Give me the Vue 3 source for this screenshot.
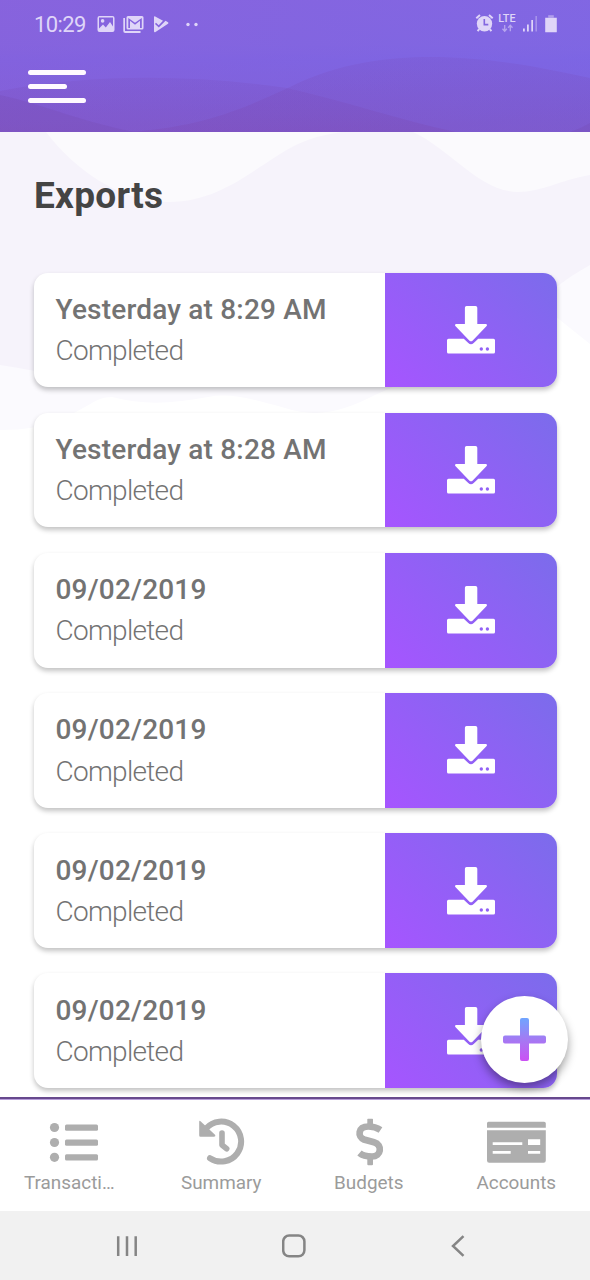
<script setup>
const exportsList = [
  { title: 'Yesterday at 8:29 AM', status: 'Completed' },
  { title: 'Yesterday at 8:28 AM', status: 'Completed' },
  { title: '09/02/2019', status: 'Completed' },
  { title: '09/02/2019', status: 'Completed' },
  { title: '09/02/2019', status: 'Completed' },
  { title: '09/02/2019', status: 'Completed' },
]
</script>

<template>
  <div class="screen">
    <header class="header">
      <svg class="waves" viewBox="0 0 590 132" preserveAspectRatio="none">
        <defs>
          <linearGradient id="fadeA" x1="0" y1="0" x2="0" y2="1">
            <stop offset="0" stop-color="#7646b0" stop-opacity=".15" />
            <stop offset="1" stop-color="#7c48ae" stop-opacity=".28" />
          </linearGradient>
        </defs>
        <path d="M0 91C90 74 190 74 287 88C345 101 400 120 456 132H0Z" fill="url(#fadeA)" />
        <path d="M130 132C210 126 250 105 290 87C340 62 390 57 430 57C490 57 545 68 590 78V132Z" fill="url(#fadeA)" />
        <path d="M0 95C45 105 85 123 135 132H0Z" fill="#7347a5" opacity=".2" />
        <path d="M570 132Q580 129 590 123V132Z" fill="#7347a5" opacity=".2" />
      </svg>
      <div class="status">
        <span class="clock">10:29</span>
        <svg class="status-left" viewBox="0 0 104 20" width="104" height="20">
          <path fill-rule="evenodd" d="M2.5 1H15.5Q17.5 1 17.5 3V15Q17.5 17 15.5 17H2.5Q.5 17 .5 15V3Q.5 1 2.5 1ZM2 2.5V13.5L6 9.5L8.8 12.5L13 7L16 11.5V2.5Z" />
          <circle cx="5.6" cy="5.9" r="1.8" />
          <path d="M26.3 3H28V16H43.5V18H28.2Q26.3 18 26.3 16Z" />
          <path fill-rule="evenodd" d="M31 1H45Q46.5 1 46.5 2.5V13Q46.5 14.5 45 14.5H31Q29.5 14.5 29.5 13V2.5Q29.5 1 31 1ZM31.3 3V13H33V5.8L38 9.7L43 5.8V13H44.8V3L38 7.7Z" />
          <path d="M34.3 7.5V13.2H41.8V7.5L38 10.6Z" opacity=".75" />
          <path d="M57 2Q57 .8 58.2 1.5L66 5.8L61.7 10.3L59 7.8L58 9L61.8 12.5L68.5 5.7L71 7.2Q72 8 71 8.8L58.5 17Q57 17.7 57 16Z" />
          <circle cx="91" cy="9.5" r="1.7" /><circle cx="99" cy="9.5" r="1.7" />
        </svg>
        <svg class="status-right" viewBox="0 0 84 22" width="84" height="22">
          <circle cx="9.5" cy="10.8" r="7.7" />
          <path d="M1.3 5.2L5 2M17.7 5.2L14 2M4.2 16.2L2.6 18.2M14.8 16.2L16.4 18.2" stroke="#dfd5f8" stroke-width="2" />
          <path d="M9.3 6V11.6H13.3" fill="none" stroke="#8366df" stroke-width="1.6" />
          <text x="23.3" y="9.4" textLength="17.2" lengthAdjust="spacingAndGlyphs">LTE</text>
          <path d="M29.7 12V18M27.5 15.7L29.7 18.2L31.9 15.7M35.3 18.2V12.5M33.1 14.7L35.3 12.3L37.5 14.7" fill="none" stroke="#b6a5ee" stroke-width="1.3" />
          <path d="M48 15.5H49.8V18.5H48ZM52 11.5H53.8V18.5H52ZM56.3 7H58V18.5H56.3Z" />
          <path d="M60.4 3H62V18.5H60.4Z" opacity=".4" />
          <path d="M70.2 4.7H81.8V18.7Q81.8 19.2 81.3 19.2H70.7Q70.2 19.2 70.2 18.7Z" />
          <path d="M73.2 2.2H78.8V4.7H73.2Z" opacity=".5" />
        </svg>
      </div>
      <div class="menu"><i /><i class="short" /><i /></div>
    </header>

    <main class="content">
      <svg class="backdrop" viewBox="0 0 590 300">
        <path d="M0 0H590V212Q575 200 555 184L375 263C345 278 320 287 285 276C250 266 230 261 208 265C175 271 145 274 112 265C95 265 88 276 65 285C45 295 25 298 0 298Z" fill="#fbfafe" />
        <path d="M0 0H590V133C565 147 550 160 530 175L350 250H90C60 245 30 237 0 233Z" fill="#f6f3fb" />
        <path d="M46 0C75 38 120 70 169 70C225 70 260 30 298 12Q318 3 342 0Z" fill="#fbfafd" />
        <path d="M413 0C450 17 480 60 518 60C542 60 560 48 590 43V0Z" fill="#fbfafd" />
      </svg>
      <h1>Exports</h1>
      <div class="list">
        <article v-for="(item, i) in exportsList" :key="i" class="card">
          <div class="info">
            <div class="title">{{ item.title }}</div>
            <div class="state">{{ item.status }}</div>
          </div>
          <div class="action">
            <svg viewBox="0 0 48 48" width="48" height="48" fill="#fff">
              <path d="M19.5 0H28.5Q30.3 0 30.3 1.8V18H38.5Q41 18.3 39.4 20.3L25.5 34.7Q24 36 22.5 34.7L8.6 20.3Q7 18.3 9.5 18H17.9V1.8Q17.9 0 19.5 0Z" />
              <path fill-rule="evenodd" d="M1.5 32.7H16.8L21.3 37Q24 39.4 26.7 37L31.2 32.7H46.5Q48 32.7 48 34.2V46Q48 47.5 46.5 47.5H1.5Q0 47.5 0 46V34.2Q0 32.7 1.5 32.7ZM32.6 43A1.7 1.7 0 1 0 36 43A1.7 1.7 0 1 0 32.6 43ZM38.7 43A1.7 1.7 0 1 0 42.1 43A1.7 1.7 0 1 0 38.7 43Z" />
            </svg>
          </div>
        </article>
      </div>
      <div class="fab">
        <svg viewBox="0.5 0.5 43 43" width="43" height="43">
          <defs>
            <linearGradient id="plus" x1="0" y1="0" x2="0" y2="1">
              <stop offset="0" stop-color="#6fa5ff" />
              <stop offset=".5" stop-color="#a47af3" />
              <stop offset="1" stop-color="#cb51f4" />
            </linearGradient>
          </defs>
          <path d="M19.5 .5H24.5Q26.5 .5 26.5 2.5V18H41.5Q43.5 18 43.5 20V24Q43.5 26 41.5 26H26.5V41.5Q26.5 43.5 24.5 43.5H19.5Q17.5 43.5 17.5 41.5V26H2.5Q.5 26 .5 24V20Q.5 18 2.5 18H17.5V2.5Q17.5 .5 19.5 .5Z" fill="url(#plus)" />
        </svg>
      </div>
    </main>

    <nav class="tabs">
      <div class="tab transactions">
        <svg viewBox="0 0 60 48" width="60" height="48">
          <circle cx="10.5" cy="9.5" r="4.6" /><circle cx="10.5" cy="24.5" r="4.6" /><circle cx="10.5" cy="39.3" r="4.6" />
          <rect x="21" y="6.5" width="33" height="6.2" rx="1.5" /><rect x="21" y="21.5" width="33" height="6.2" rx="1.5" /><rect x="21" y="36.2" width="33" height="6.2" rx="1.5" />
        </svg>
        <span>Transacti…</span>
      </div>
      <div class="tab">
        <svg viewBox="-1 0 60 48" width="60" height="48">
          <path d="M14 10.5A20 20 0 1 1 18 40.2" fill="none" stroke="#aeaeae" stroke-width="6" stroke-linecap="round" />
          <path d="M7.2 4Q7.2 2 8.8 3.4L23 16.8Q24 18.7 21.8 18.8H8.5Q7.2 18.8 7.2 17.3Z" />
          <path d="M30 15V27L34.7 30.7" fill="none" stroke="#aeaeae" stroke-width="5.6" stroke-linecap="round" stroke-linejoin="round" />
        </svg>
        <span>Summary</span>
      </div>
      <div class="tab">
        <svg viewBox="-1 0 60 48" width="60" height="48">
          <path d="M40.5 12C36 9 32 8.5 28.5 8.5C17.5 8.5 17.5 19 24 21.5L34 24.3C43 27 41 38.5 32 38.5C27 38.5 23 38 19.5 35" fill="none" stroke="#aeaeae" stroke-width="6.7" />
          <path d="M27.3 1.2Q27.3 .7 28 .7H32.3Q33 .7 33 1.5V8H27.3ZM27.3 39H33V46.2Q33 47.2 32 47.2H28.3Q27.3 47.2 27.3 46.2Z" />
        </svg>
        <span>Budgets</span>
      </div>
      <div class="tab">
        <svg viewBox="-.5 0 60 48" width="60" height="48">
          <path d="M.5 5.2Q.5 3.7 2 3.7H57.5Q59.3 3.7 59.3 5.2V9.8H.5ZM.5 12.3H59.3V42.5Q59.3 44.7 57.1 44.7H2.7Q.5 44.7 .5 42.5Z" />
          <path d="M6.2 24.2H35.8V27H6.2ZM6.2 33H24.2V35.8H6.2ZM41.5 21.2H53.7V27H41.5ZM41.5 33H53.7V35.8H41.5Z" fill="#fff" />
        </svg>
        <span>Accounts</span>
      </div>
    </nav>

    <footer class="system">
      <svg viewBox="0 0 24 24" width="24" height="24"><path d="M2.2 2.2V22M11 2.2V22M19.7 2.2V22" /></svg>
      <svg viewBox="0 0 24 24" width="24" height="24"><rect x="1.2" y="1.5" width="21.2" height="20.8" rx="6" /></svg>
      <svg viewBox="0 0 24 24" width="24" height="24"><path d="M16.5 2.2L6 12L16.5 21.8" /></svg>
    </footer>
  </div>
</template>

<style>
body { margin: 0; }
</style>

<style scoped>
.screen {
  width: 590px;
  height: 1280px;
  display: flex;
  flex-direction: column;
  overflow: hidden;
  background: #fff;
  font-family: Roboto, "Liberation Sans", sans-serif;
}
.header {
  position: relative;
  box-sizing: border-box;
  height: 132px;
  flex: none;
  background: linear-gradient(90deg, rgba(138, 92, 216, .35), rgba(120, 102, 232, .35)), linear-gradient(#8667e0 0, #8367e0 45px, #7f65e1 60px, #8060d4 132px);
}
.waves { position: absolute; inset: 0; width: 100%; height: 100%; }
.status {
  position: relative;
  display: flex;
  align-items: center;
  height: 48px;
  padding: 0 31px 0 34px;
  color: #dfd5f8;
  fill: #dfd5f8;
}
.clock { font-size: 22px; width: 62.5px; letter-spacing: -.6px; }
.status-right { margin-left: auto; }
.status-right text { font: 500 11px Roboto, sans-serif; }
.status-left { margin-top: 1px; }
.menu {
  position: relative;
  display: flex;
  flex-direction: column;
  gap: 9.4px;
  padding: 22px 0 0 28px;
}
.menu i { width: 58px; height: 4.8px; border-radius: 3px; background: #fff9ff; }
.menu .short { width: 39px; }
.content {
  position: relative;
  height: 965px;
  flex: none;
  box-sizing: border-box;
  padding: 0 33px 0 34px;
}
.backdrop { position: absolute; left: 0; top: 0; width: 590px; height: 300px; }
h1 {
  position: relative;
  margin: 0;
  padding-top: 42px;
  height: 98.5px;
  color: #444;
  font-size: 37px;
  line-height: 44px;
  font-weight: 700;
  letter-spacing: .3px;
}
.list { position: relative; display: flex; flex-direction: column; gap: 25.5px; }
.card {
  display: flex;
  height: 114.7px;
  border-radius: 14px;
  background: #fff;
  box-shadow: 0 3px 5px rgba(0, 0, 0, .24);
}
.info { flex: 1; padding: 20.3px 0 0 21.5px; color: #737373; }
.title { font-size: 28px; line-height: 34px; font-weight: 500; letter-spacing: .19px; white-space: nowrap; }
.state { margin-top: 7.3px; font-size: 28px; line-height: 34px; font-weight: 300; letter-spacing: -.7px; }
.action {
  display: flex;
  align-items: center;
  justify-content: center;
  width: 172px;
  border-radius: 0 14px 14px 0;
  background: linear-gradient(45deg, #a655ff, #7b6ceb);
}
.fab {
  position: absolute;
  left: 481px;
  top: 864px;
  display: flex;
  align-items: center;
  justify-content: center;
  width: 87px;
  height: 87px;
  border-radius: 50%;
  background: #fff;
  box-shadow: 0 5px 10px rgba(0, 0, 0, .38);
}
.tabs {
  position: relative;
  display: flex;
  height: 114px;
  flex: none;
  box-sizing: border-box;
  border-top: 2px solid #67498d;
  box-shadow: inset 0 1px #b79dda;
  background: #fff;
}
.tab {
  flex: 1;
  display: flex;
  flex-direction: column;
  align-items: center;
  padding-top: 19px;
  color: #9b9b9b;
  fill: #aeaeae;
}
.tab span { margin-top: 5px; font-size: 18.9px; line-height: 24px; }
.transactions span { margin-right: 9px; }
.system {
  display: flex;
  align-items: center;
  justify-content: space-between;
  height: 69px;
  flex: none;
  box-sizing: border-box;
  padding: 0 119px 0 116px;
  background: #f1f1f1;
  fill: none;
  stroke: #858585;
  stroke-width: 2.5;
}
</style>
